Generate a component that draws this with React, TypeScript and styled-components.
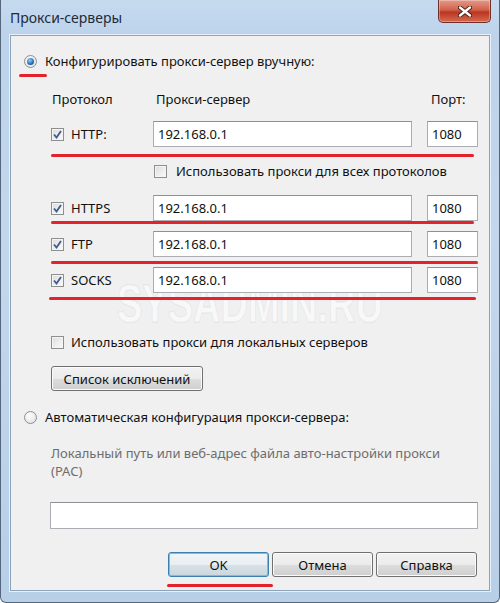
import React from "react";
import styled, { createGlobalStyle, css } from "styled-components";

const GlobalStyle = createGlobalStyle`
  html, body {
    margin: 0;
    padding: 0;
    background: #ffffff;
  }
  * {
    box-sizing: border-box;
  }
`;

type ProxyRow = {
  name: string;
  host: string;
  port: string;
  markGap: number;
};

const rows: ProxyRow[] = [
  { name: "HTTPS", host: "192.168.0.1", port: "1080", markGap: 0 },
  { name: "FTP", host: "192.168.0.1", port: "1080", markGap: 4 },
  { name: "SOCKS", host: "192.168.0.1", port: "1080", markGap: 4 },
];

const CheckBox = ({ checked }: { checked?: boolean }) => (
  <Box>
    {checked ? (
      <svg width="9" height="9" viewBox="0 0 9 9">
        <path
          d="M1 4.5 L3.5 7.5 L8 1"
          fill="none"
          stroke="#3f5a8c"
          strokeWidth="1.8"
        />
      </svg>
    ) : null}
  </Box>
);

const App = () => {
  return (
    <>
      <GlobalStyle />
      <Window>
        <TitleBar>
          <Title>Прокси-серверы</Title>
          <CloseButton>
            <svg width="14" height="11" viewBox="0 0 14 11">
              <path
                d="M2 1.5 L12 9.5 M12 1.5 L2 9.5"
                stroke="#4a1a12"
                strokeWidth="4.2"
                strokeLinecap="round"
              />
              <path
                d="M2 1.5 L12 9.5 M12 1.5 L2 9.5"
                stroke="#ffffff"
                strokeWidth="2.4"
                strokeLinecap="round"
              />
            </svg>
          </CloseButton>
        </TitleBar>
        <Client>
          <Watermark>SYSADMIN.RU</Watermark>

          <ModeRow $top={16}>
            <Radio $on />
            Конфигурировать прокси-сервер вручную:
            <Mark $top={22} $left={-5} $width={28} />
          </ModeRow>

          <Indent>
            <HeaderGrid>
              <span>Протокол</span>
              <span>Прокси-сервер</span>
              <PortCell>Порт:</PortCell>
            </HeaderGrid>

            <ProxyGrid $top={13}>
              <ProtoLabel>
                <CheckBox checked />
                HTTP:
              </ProtoLabel>
              <TextBox>192.168.0.1</TextBox>
              <PortBox>1080</PortBox>
              <Mark $top={33} $left={0} $width={423} />
            </ProxyGrid>

            <AllRow>
              <CheckBox />
              Использовать прокси для всех протоколов
            </AllRow>

            {rows.map((r, i) => (
              <ProxyGrid key={r.name} $top={i === 0 ? 15 : 10}>
                <ProtoLabel>
                  <CheckBox checked />
                  {r.name}
                </ProtoLabel>
                <TextBox>{r.host}</TextBox>
                <PortBox>{r.port}</PortBox>
                <Mark
                  $top={26 + r.markGap}
                  $left={i === 2 ? -2 : 0}
                  $width={i === 0 ? 423 : 427}
                />
              </ProxyGrid>
            ))}

            <CheckRow $top={40}>
              <CheckBox />
              Использовать прокси для локальных серверов
            </CheckRow>

            <Button $top={15} $width={152}>
              Список исключений
            </Button>
          </Indent>

          <ModeRow $top={17}>
            <Radio />
            Автоматическая конфигурация прокси-сервера:
          </ModeRow>

          <Indent>
            <Hint>
              Локальный путь или веб-адрес файла авто-настройки прокси
              <br />
              (PAC)
            </Hint>
            <PacBox />
          </Indent>

          <Footer>
            <MarkHolder>
              <Button $default $width={101}>
                OK
              </Button>
              <Mark $top={32} $left={-1} $width={106} />
            </MarkHolder>
            <Button $width={101}>Отмена</Button>
            <Button $width={101}>Справка</Button>
          </Footer>
        </Client>
      </Window>
    </>
  );
};

export default App;

const uiFont = `"Noto Sans", "Open Sans", sans-serif`;

const Window = styled.div`
  width: 500px;
  height: 603px;
  display: flex;
  flex-direction: column;
  padding: 0 9px 11px 9px;
  background: linear-gradient(
    180deg,
    #c6daef 0%,
    #bcd3eb 6%,
    #c3d7ec 40%,
    #b8cfe8 100%
  );
  border: 1px solid #55677c;
  border-top: none;
  border-radius: 0 0 6px 6px;
  font-family: ${uiFont};
  color: #111;
  overflow: hidden;
`;

const TitleBar = styled.div`
  height: 35px;
  display: flex;
  align-items: flex-start;
  justify-content: space-between;
  flex-shrink: 0;
`;

const Title = styled.div`
  font-size: 14px;
  color: #1c2a3a;
  margin-top: 8px;
`;

const CloseButton = styled.div`
  width: 53px;
  height: 23px;
  margin-right: -1px;
  border: 1px solid #70302a;
  border-top: none;
  border-radius: 0 0 5px 5px;
  background: linear-gradient(
    180deg,
    #e49a88 0%,
    #d0624b 45%,
    #bb3520 55%,
    #d46a50 100%
  );
  box-shadow: inset 0 0 0 1px rgba(255, 255, 255, 0.3);
  display: flex;
  align-items: center;
  justify-content: center;
`;

const Client = styled.div`
  position: relative;
  flex: 1;
  background: #f0f0f0;
  border: 1px solid #8da2bb;
  box-shadow: 0 0 0 1px #e8f0f9;
  padding-left: 13px;
  display: flex;
  flex-direction: column;
  font-size: 13px;
`;

const Watermark = styled.div`
  position: absolute;
  left: 0;
  right: 0;
  top: 246px;
  text-align: center;
  font-family: "Liberation Sans", Arial, sans-serif;
  font-weight: bold;
  font-size: 38px;
  line-height: 44px;
  transform: scaleY(1.4);
  color: rgba(255, 255, 255, 0.6);
  -webkit-text-stroke: 1px rgba(150, 150, 150, 0.12);
  pointer-events: none;
`;

const ModeRow = styled.div<{ $top: number }>`
  position: relative;
  display: flex;
  align-items: center;
  height: 18px;
  margin-top: ${(p) => p.$top}px;
  gap: 8px;
`;

const Radio = styled.span<{ $on?: boolean }>`
  width: 13px;
  height: 13px;
  border-radius: 50%;
  border: 1px solid #8a9099;
  background: radial-gradient(circle at 40% 35%, #ffffff, #dcdcdc);
  flex-shrink: 0;
  position: relative;
  ${(p) =>
    p.$on &&
    css`
      &::after {
        content: "";
        position: absolute;
        left: 2px;
        top: 2px;
        width: 7px;
        height: 7px;
        border-radius: 50%;
        background: radial-gradient(circle at 40% 35%, #8fd0ff, #1b5a9c 70%);
      }
    `}
`;

const Mark = styled.span<{ $top: number; $left: number; $width: number }>`
  position: absolute;
  top: ${(p) => p.$top}px;
  left: ${(p) => p.$left}px;
  width: ${(p) => p.$width}px;
  height: 3px;
  border-radius: 2px;
  background: #e3222b;
  pointer-events: none;
`;

const Indent = styled.div`
  display: flex;
  flex-direction: column;
  align-items: flex-start;
  padding-left: 27px;
`;

const columns = css`
  display: grid;
  grid-template-columns: 102px 259px 15px 51px;
`;

const HeaderGrid = styled.div`
  ${columns};
  margin-top: 20px;
  height: 18px;
  align-items: center;
  & > span:first-child {
    padding-left: 1px;
  }
  & > span:nth-child(2) {
    padding-left: 3px;
  }
`;

const PortCell = styled.span`
  grid-column: 4;
  padding-left: 4px;
`;

const ProxyGrid = styled.div<{ $top: number }>`
  ${columns};
  position: relative;
  height: 26px;
  margin-top: ${(p) => p.$top}px;
  align-items: stretch;
`;

const ProtoLabel = styled.div`
  display: flex;
  align-items: center;
  gap: 7px;
`;

const Box = styled.span`
  width: 13px;
  height: 13px;
  border: 1px solid #8e8f8f;
  background: linear-gradient(135deg, #dcdcdc, #fbfbfb);
  box-shadow: inset 0 0 0 1px #f4f4f4;
  display: inline-flex;
  align-items: center;
  justify-content: center;
  flex-shrink: 0;
`;

const TextBox = styled.div`
  background: #ffffff;
  border: 1px solid #abadb3;
  border-top-color: #8e9096;
  display: flex;
  align-items: center;
  padding-left: 4px;
`;

const PortBox = styled(TextBox)`
  grid-column: 4;
`;

const AllRow = styled.div`
  display: flex;
  align-items: center;
  gap: 9px;
  height: 18px;
  margin-top: 15px;
  margin-left: 103px;
`;

const CheckRow = styled.div<{ $top: number }>`
  display: flex;
  align-items: center;
  gap: 7px;
  height: 18px;
  margin-top: ${(p) => p.$top}px;
`;

const Button = styled.div<{ $top?: number; $width: number; $default?: boolean }>`
  width: ${(p) => p.$width}px;
  height: 25px;
  margin-top: ${(p) => p.$top ?? 0}px;
  border: 1px solid #707070;
  border-radius: 3px;
  background: linear-gradient(
    180deg,
    #f2f2f2 0%,
    #ebebeb 50%,
    #dddddd 51%,
    #cfcfcf 100%
  );
  box-shadow: inset 0 0 0 1px #fbfbfb;
  display: flex;
  align-items: center;
  justify-content: center;
  ${(p) =>
    p.$default &&
    css`
      border-color: #3c7fb1;
      box-shadow: inset 0 0 0 1px #48d4f9;
      background: linear-gradient(
        180deg,
        #f1f5f7 0%,
        #e8eef2 50%,
        #d8e2e8 51%,
        #cbd6dd 100%
      );
    `}
`;

const Hint = styled.div`
  margin-top: 18px;
  line-height: 18px;
  color: #6d6d6d;
`;

const PacBox = styled.div`
  margin-top: 22px;
  width: 428px;
  height: 27px;
  margin-left: -1px;
  background: #ffffff;
  border: 1px solid #abadb3;
  border-top-color: #8e9096;
`;

const Footer = styled.div`
  display: flex;
  gap: 3px;
  margin-top: 23px;
  padding-left: 144px;
`;

const MarkHolder = styled.div`
  position: relative;
`;
